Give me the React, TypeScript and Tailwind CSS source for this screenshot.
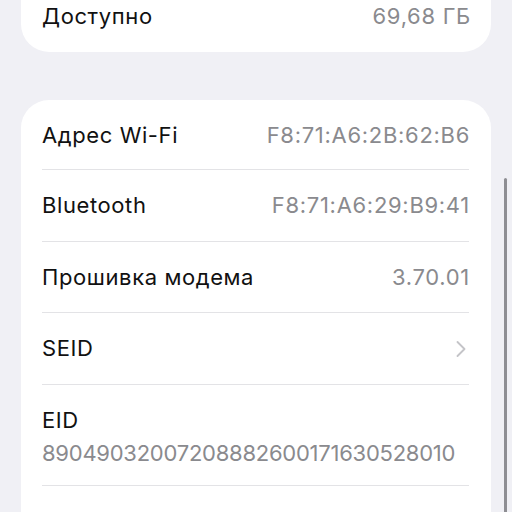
import { ChevronRight } from "lucide-react";

const font = { fontFamily: "Inter, 'Noto Sans', sans-serif" };

function Row({
  label,
  value,
  chevron,
  className = "h-[72px]",
  last,
}: {
  label: string;
  value?: string;
  chevron?: boolean;
  className?: string;
  last?: boolean;
}) {
  return (
    <div className={`flex items-center justify-between ${last ? "" : "border-b border-[#e3e3e6]"} ${className}`}>
      <span className="text-[22px] tracking-[0.6px] text-[#111]">{label}</span>
      {value && <span className="-mr-[1px] text-[22px] tracking-[0.7px] text-[#8a8a8e]">{value}</span>}
      {chevron && <ChevronRight className="-mr-[6px] h-7 w-7 text-[#c4c4c8]" strokeWidth={1.6} />}
    </div>
  );
}

export default function App() {
  return (
    <div className="relative h-[512px] w-[512px] overflow-hidden bg-[#f0f0f5]" style={font}>
      {/* storage card */}
      <div className="mx-[21px] -mt-[20px] rounded-b-[28px] bg-white px-[21px]">
        <Row label="Доступно" value="69,68 ГБ" last />
      </div>

      {/* network card */}
      <div className="mx-[21px] mt-[48px] rounded-t-[28px] bg-white pl-[21px] pr-[22px]">
        <Row label="Адрес Wi-Fi" value="F8:71:A6:2B:62:B6" className="h-[70px] pt-[2px]" />
        <Row label="Bluetooth" value="F8:71:A6:29:B9:41" />
        <Row label="Прошивка модема" value="3.70.01" className="h-[71px]" />
        <Row label="SEID" chevron />
        <div className="flex h-[101px] flex-col justify-center border-b border-[#e3e3e6] pt-[2px]">
          <span className="text-[22px] leading-[30px] tracking-[0.6px] text-[#111]">EID</span>
          <span className="mt-[3px] text-[22px] leading-[30px] tracking-[-0.25px] text-[#8a8a8e]">
            89049032007208882600171630528010
          </span>
        </div>
        <div className="h-[60px]" />
      </div>

      {/* scroll indicator */}
      <div className="absolute right-[5px] top-[178px] h-[360px] w-[3px] rounded-full bg-[#8e8e93]" />
    </div>
  );
}
